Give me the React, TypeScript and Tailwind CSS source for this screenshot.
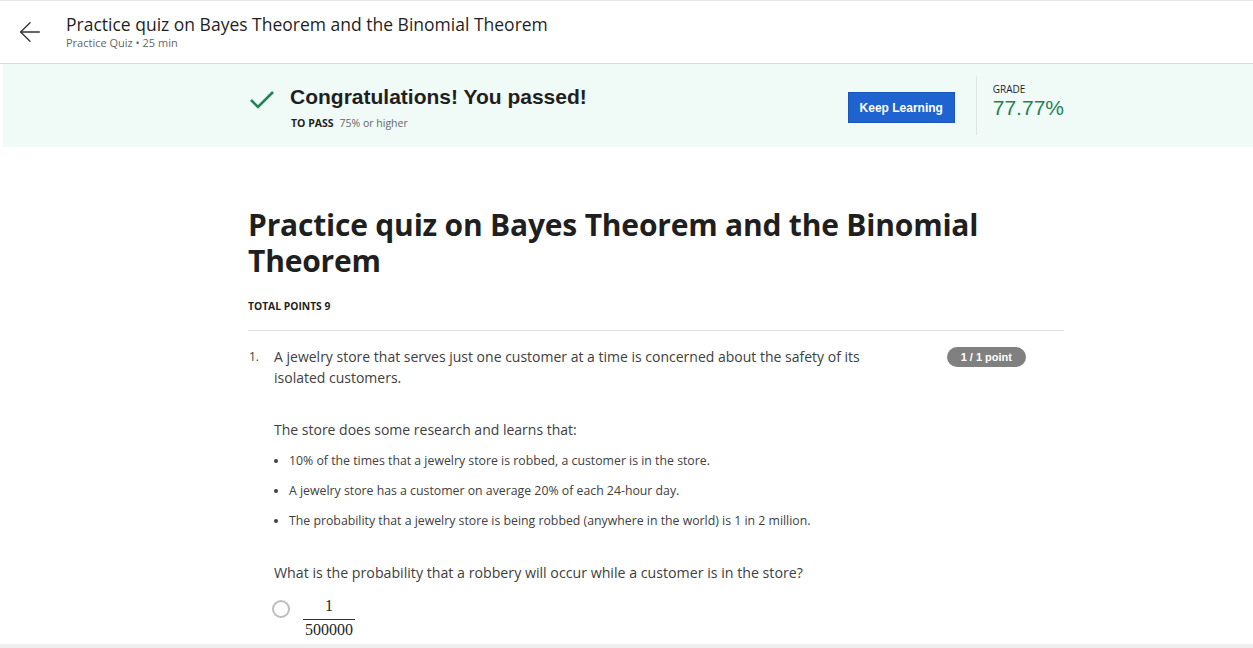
import { ArrowLeft } from 'lucide-react'

// ── Dados da questao ──────────────────────────────
const facts = [
  '10% of the times that a jewelry store is robbed, a customer is in the store.',
  'A jewelry store has a customer on average 20% of each 24-hour day.',
  'The probability that a jewelry store is being robbed (anywhere in the world) is 1 in 2 million.',
]

export default function App() {
  return (
    <div className="min-h-[648px] bg-white border-t border-[#e5e5e5] flex flex-col font-['Open_Sans',sans-serif] text-[#1f1f1f]">
      {/* Header */}
      <header className="h-[63px] flex items-center border-b border-[#d9d9d9]">
        <div className="w-[66px] flex justify-center pr-[6px]">
          <ArrowLeft size={32} strokeWidth={1} className="text-[#333]" />
        </div>
        <div className="flex flex-col -mt-[2px]">
          <span className="text-[17.5px] leading-[24px] text-[#1f1f1f]">
            Practice quiz on Bayes Theorem and the Binomial Theorem
          </span>
          <span className="text-[11px] leading-[14px] text-[#666]">Practice Quiz • 25 min</span>
        </div>
      </header>

      {/* Banner de aprovacao */}
      <div className="ml-[3px] h-[83px] bg-[#f0faf7] flex">
        <div className="ml-[245px] w-[816px] flex items-stretch">
          <div className="flex-1 flex pt-[21px]">
            <svg width="28" height="22" viewBox="0 0 28 22" className="mt-[4px]">
              <path d="M3 11 L10 18 L25 3" fill="none" stroke="#1f8354" strokeWidth="2.6" />
            </svg>
            <div className="ml-[14px]">
              <div className="font-['Liberation_Sans',Arial,sans-serif] font-bold text-[21px] leading-[24px] text-[#1f1f1f]">
                Congratulations! You passed!
              </div>
              <div className="mt-[7px] text-[10.5px] leading-[14px] ml-[1px]">
                <span className="font-bold text-[#1f1f1f]">TO PASS</span>
                <span className="ml-[6px] text-[#666]">75% or higher</span>
              </div>
            </div>
          </div>
          <div className="flex items-center pr-[21px] pt-[4px]">
            <button className="w-[107px] h-[31px] bg-[#1f63d0] border border-[#1a56b8] text-white font-['Liberation_Sans',Arial,sans-serif] font-bold text-[12px]">
              Keep Learning
            </button>
          </div>
          <div className="my-[12px] border-l border-[#e0e5e3]" />
          <div className="pl-[16px] pt-[18px] flex flex-col">
            <span className="text-[10px] leading-[14px] text-[#1f1f1f]">GRADE</span>
            <span className="text-[21px] leading-[24px] text-[#1f8354] font-['Liberation_Sans',Arial,sans-serif]">77.77%</span>
          </div>
        </div>
      </div>

      {/* Conteudo */}
      <main className="ml-[248px] w-[816px] pt-[60px] flex-1">
        <h1 className="text-[30px] leading-[36px] font-bold text-[#1f1f1f] tracking-[-0.2px]">
          Practice quiz on Bayes Theorem and the Binomial Theorem
        </h1>
        <div className="mt-[20px] text-[10.3px] leading-[14px] font-bold text-[#1f1f1f]">TOTAL POINTS 9</div>
        <hr className="mt-[17px] border-[#e0e0e0]" />

        <div className="mt-[15px] flex text-[#404040]">
          <div className="w-[26px] text-[12px] leading-[21px] pl-[1px]">1.</div>
          <div className="flex-1">
            <div className="flex justify-between">
              <p className="w-[600px] text-[14px] leading-[21px]">
                A jewelry store that serves just one customer at a time is concerned about the safety of its isolated customers.
              </p>
              <span className="mr-[38px] mt-[1px] h-[20px] px-[14px] rounded-full bg-[#808080] text-white font-['Liberation_Sans',Arial,sans-serif] font-bold text-[11px] leading-[20px]">
                1 / 1 point
              </span>
            </div>
            <p className="mt-[31px] text-[14px] leading-[21px]">The store does some research and learns that:</p>
            <ul className="mt-[10px] flex flex-col gap-[9px] text-[12.3px] leading-[21px] list-disc pl-[15px] marker:text-[#404040]">
              {facts.map(f => (
                <li key={f}>{f}</li>
              ))}
            </ul>
            <p className="mt-[31px] text-[14.2px] leading-[21px]">
              What is the probability that a robbery will occur while a customer is in the store?
            </p>
            <div className="mt-[12px] flex items-start -ml-[2px]">
              <div className="mt-[5px] w-[18px] h-[18px] rounded-full border-2 border-[#bdbdbd]" />
              <div className="ml-[13px] mt-[2px] flex flex-col items-center font-['Liberation_Serif','Times_New_Roman',serif] text-[16px] leading-[18px] text-[#1f1f1f]">
                <span className="px-[2px]">1</span>
                <span className="mt-[4px] border-t border-[#333] pt-[1px] px-[2px]">500000</span>
              </div>
            </div>
          </div>
        </div>
      </main>

      <div className="h-[4px] bg-[#efefef] mt-auto" />
    </div>
  )
}
